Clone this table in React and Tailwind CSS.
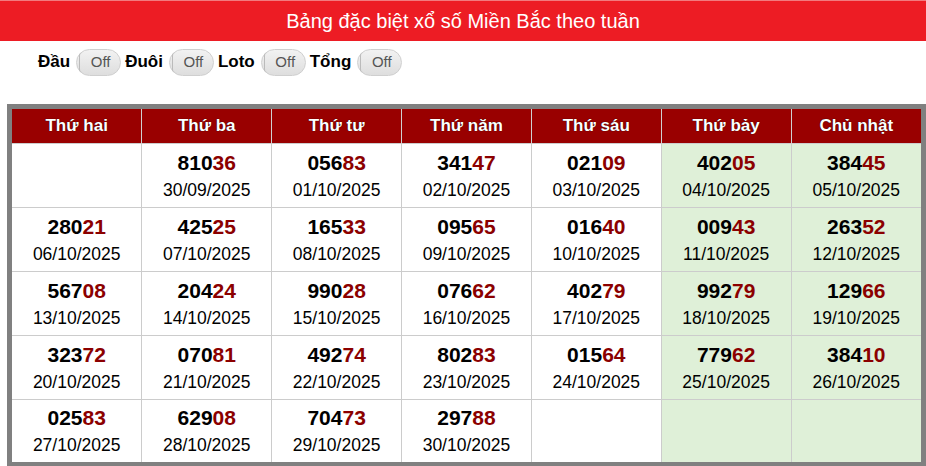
import React from "react";

const days = ["Thứ hai", "Thứ ba", "Thứ tư", "Thứ năm", "Thứ sáu", "Thứ bảy", "Chủ nhật"];

const rows = [
  [null, ["81036", "30/09/2025"], ["05683", "01/10/2025"], ["34147", "02/10/2025"], ["02109", "03/10/2025"], ["40205", "04/10/2025"], ["38445", "05/10/2025"]],
  [["28021", "06/10/2025"], ["42525", "07/10/2025"], ["16533", "08/10/2025"], ["09565", "09/10/2025"], ["01640", "10/10/2025"], ["00943", "11/10/2025"], ["26352", "12/10/2025"]],
  [["56708", "13/10/2025"], ["20424", "14/10/2025"], ["99028", "15/10/2025"], ["07662", "16/10/2025"], ["40279", "17/10/2025"], ["99279", "18/10/2025"], ["12966", "19/10/2025"]],
  [["32372", "20/10/2025"], ["07081", "21/10/2025"], ["49274", "22/10/2025"], ["80283", "23/10/2025"], ["01564", "24/10/2025"], ["77962", "25/10/2025"], ["38410", "26/10/2025"]],
  [["02583", "27/10/2025"], ["62908", "28/10/2025"], ["70473", "29/10/2025"], ["29788", "30/10/2025"], null, null, null],
];

function Toggle() {
  return (
    <div className="w-[45px] h-[27px] rounded-full border border-[#cfcfcf] bg-gradient-to-b from-[#f2f2f2] to-[#dedede] flex items-center justify-center text-[15px] font-normal text-[#555] relative">
      <span className="absolute left-[2px] top-[3px] bottom-[3px] w-[3px] rounded-l-full border-l border-[#bbb]"></span>
      <span className="ml-[4px]">Off</span>
    </div>
  );
}

export default function App() {
  return (
    <div className="w-[926px] h-[466px] bg-white overflow-hidden" style={{ fontFamily: '"Liberation Sans", Arial, sans-serif' }}>
      <div className="h-[41px] bg-[#ed1c24] border-t border-[#f27a7e] flex items-center justify-center text-white text-[20px]">
        Bảng đặc biệt xổ số Miền Bắc theo tuần
      </div>
      <div className="flex items-center h-[42px] pl-[38px] gap-[4px] text-[17px] font-bold text-black">
        <span className="mr-[2px]">Đầu</span>
        <Toggle />
        <span className="mr-[2px]">Đuôi</span>
        <Toggle />
        <span className="mr-[2px]">Loto</span>
        <Toggle />
        <span className="mr-[2px]">Tổng</span>
        <Toggle />
      </div>
      <div className="ml-[7px] mt-[21px] border-[5px] border-[#808080]">
        <table className="w-full table-fixed border-collapse">
          <thead>
            <tr className="h-[34px] bg-[#990000]">
              {days.map((d) => (
                <th key={d} className="text-white font-bold text-[17px] border-x border-[#d0d0d0] first:border-l-0 last:border-r-0 [text-shadow:0_0_1px_#000]">
                  {d}
                </th>
              ))}
            </tr>
          </thead>
          <tbody>
            {rows.map((r, i) => (
              <tr key={i} className={i === rows.length - 1 ? "h-[63px]" : "h-[64px]"}>
                {r.map((c, j) => (
                  <td
                    key={j}
                    className={`border border-[#cccccc] text-center align-middle first:border-l-0 last:border-r-0 ${i === rows.length - 1 ? "border-b-0" : ""} ${j >= 5 ? "bg-[#dff0d8]" : "bg-white"}`}
                  >
                    {c && (
                      <div className="flex flex-col items-center">
                        <div className="text-[21px] font-bold leading-[24px]">
                          <span className="text-black">{c[0].slice(0, 3)}</span>
                          <span className="text-[#8b0000]">{c[0].slice(3)}</span>
                        </div>
                        <div className="text-[17.5px] leading-[20px] mt-[5px] text-black">{c[1]}</div>
                      </div>
                    )}
                  </td>
                ))}
              </tr>
            ))}
          </tbody>
        </table>
      </div>
    </div>
  );
}
